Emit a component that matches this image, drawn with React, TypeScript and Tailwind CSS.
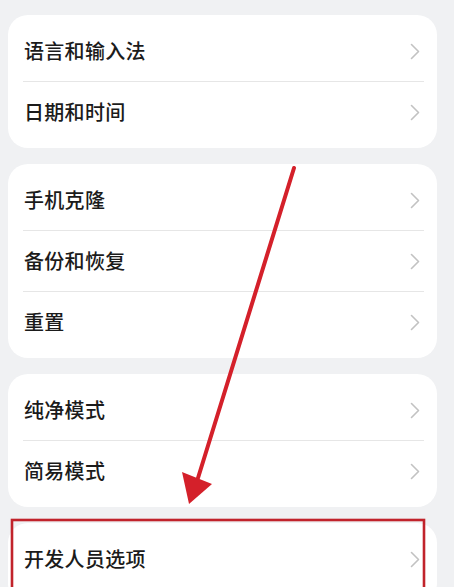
import React from 'react';

const groups: string[][] = [
  ['语言和输入法', '日期和时间'],
  ['手机克隆', '备份和恢复', '重置'],
  ['纯净模式', '简易模式'],
  ['开发人员选项'],
];

function Chevron() {
  return (
    <svg width="10" height="17" viewBox="0 0 10 17" fill="none">
      <polyline points="1.5,1.5 8.5,8.5 1.5,15.5" stroke="#c2c2c2" strokeWidth="1.6" strokeLinecap="round" strokeLinejoin="round" />
    </svg>
  );
}

export default function App() {
  return (
    <div
      className="relative w-[454px] h-[587px] overflow-hidden bg-[#f0f1f3] pt-[15px]"
      style={{ fontFamily: '"Noto Sans CJK SC", "Noto Sans", sans-serif' }}
    >
      <div className="flex flex-col gap-[16px]">
        {groups.map((items, gi) => (
          <div key={gi} className="ml-[8px] w-[429px] bg-white rounded-[20px] py-[6px] min-h-[80px]">
            {items.map((label, i) => (
              <div key={label}>
                {i > 0 && <div className="ml-[15px] mr-[13px] h-px bg-[#e6e6e6]" />}
                <div className="h-[60px] flex items-center justify-between pl-[16px] pr-[17px]">
                  <span className="text-[20px] font-medium text-[#1b1b1b] leading-none tracking-[0.3px]">{label}</span>
                  <Chevron />
                </div>
              </div>
            ))}
          </div>
        ))}
      </div>

      {/* 标注：箭头和红框 */}
      <svg className="absolute left-0 top-0 pointer-events-none" width="454" height="587" viewBox="0 0 454 587">
        <line x1="294" y1="168" x2="198" y2="478" stroke="#d4202a" strokeWidth="4" strokeLinecap="round" />
        <polygon points="182,472 212,484 189,504" fill="#d4202a" />
        <rect x="12" y="520" width="412" height="90" fill="none" stroke="#c1232b" strokeWidth="2.6" />
      </svg>
    </div>
  );
}
